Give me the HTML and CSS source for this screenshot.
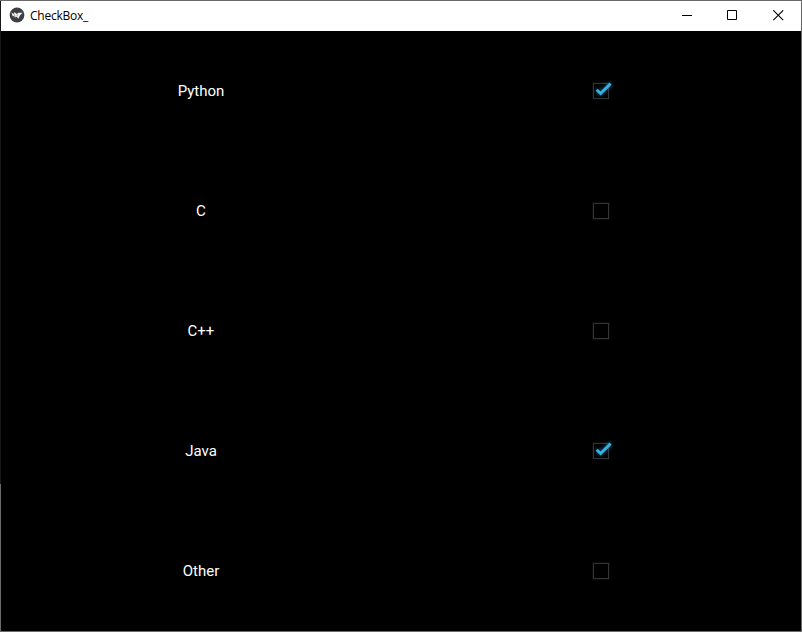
FILE: index.html
```html
<!DOCTYPE html>
<html lang="en">
<head>
<meta charset="utf-8">
<title>CheckBox_</title>
<link rel="stylesheet" href="styles.css">
</head>
<body>
<div class="window">
  <header class="titlebar">
    <svg class="logo" width="16" height="16" viewBox="0 0 16 16">
      <circle cx="8" cy="8" r="7.4" fill="#3d3f40"/>
      <path d="M2.4 5.5L5 7.1L5.5 5L7.8 7L9.2 5.7L13.6 5.7L11 8.4L9.3 11.7L7.6 9.7L5.9 10.6L5.2 9L3.7 9.2Z" fill="#f0f0f0"/>
      <path d="M5.1 7.2L6.2 9.6M8.1 7.3L8.4 9.3" stroke="#77797a" stroke-width=".6"/>
    </svg>
    <h1 class="title">CheckBox_</h1>
    <div class="controls">
      <button class="control" aria-label="Minimize"><svg width="11" height="11" viewBox="0 0 11 11"><path d="M0 5.5H10"/></svg></button>
      <button class="control" aria-label="Maximize"><svg width="11" height="11" viewBox="0 0 11 11"><path d="M.5 .5H9.5V9.5H.5Z"/></svg></button>
      <button class="control close" aria-label="Close"><svg width="11" height="11" viewBox="0 0 11 11"><path d="M.3 .3L10.2 10.2M10.2 .3L.3 10.2"/></svg></button>
    </div>
  </header>
  <main class="grid">
    <span class="label">Python</span>
    <span class="cell"><span class="box"><svg class="tick" width="24" height="24" viewBox="0 0 24 24"><path d="M6.6 9.8L10.6 13.6L20.6 3.6"/></svg></span></span>
    <span class="label">C</span>
    <span class="cell"><span class="box"></span></span>
    <span class="label">C++</span>
    <span class="cell"><span class="box"></span></span>
    <span class="label">Java</span>
    <span class="cell"><span class="box"><svg class="tick" width="24" height="24" viewBox="0 0 24 24"><path d="M6.6 9.8L10.6 13.6L20.6 3.6"/></svg></span></span>
    <span class="label">Other</span>
    <span class="cell"><span class="box"></span></span>
  </main>
</div>
</body>
</html>
```
FILE: styles.css
```css
* {
  box-sizing: border-box;
}

body {
  margin: 0;
  background: #000;
}

.window {
  display: grid;
  grid-template-rows: 30px 600px;
  width: 802px;
  height: 632px;
  padding: 1px;
  background:
    linear-gradient(#6b6b6b, #6b6b6b) top / 100% 1px no-repeat,
    linear-gradient(#6b6b6b, #6b6b6b) bottom / 100% 1px no-repeat,
    linear-gradient(#6b6b6b, #6b6b6b) right / 1px 100% no-repeat,
    linear-gradient(#18181c 484px, #6b6b6b 484px) left / 1px 100% no-repeat,
    #000;
}

.titlebar {
  display: flex;
  align-items: center;
  padding-left: 8px;
  background: #fff;
}

.logo {
  margin-top: -2px;
}

.title {
  margin: 0 0 0 5px;
  color: #000;
  font: 400 12px/16px "Open Sans", "Noto Sans", sans-serif;
  letter-spacing: -0.25px;
}

.controls {
  display: flex;
  margin-left: auto;
  height: 30px;
}

.control {
  display: flex;
  align-items: flex-start;
  justify-content: flex-start;
  width: 45px;
  padding: 9px 0 0 17px;
  border: 0;
  background: none;
}

.control.close {
  width: 46px;
  padding-left: 18px;
}

.control path {
  fill: none;
  stroke: #000;
  stroke-width: 1;
}

.control.close path {
  stroke-width: 1.1;
}

.grid {
  display: grid;
  grid-template-columns: 400px 400px;
  grid-template-rows: repeat(5, 120px);
  background: #000;
}

.label,
.cell {
  display: flex;
  align-items: center;
  justify-content: center;
}

.label {
  color: #fff;
  font: 400 15px/18px Roboto, sans-serif;
}

.box {
  position: relative;
  width: 16px;
  height: 16px;
  border: 1px solid #333;
  box-shadow: 0 0 0 1px #0a0a0a;
}

.tick {
  position: absolute;
  left: -4px;
  top: -4px;
  overflow: visible;
  filter: drop-shadow(0 0 2px #126b92);
}

.tick path {
  fill: none;
  stroke: #35b1e1;
  stroke-width: 2.9;
}
```
